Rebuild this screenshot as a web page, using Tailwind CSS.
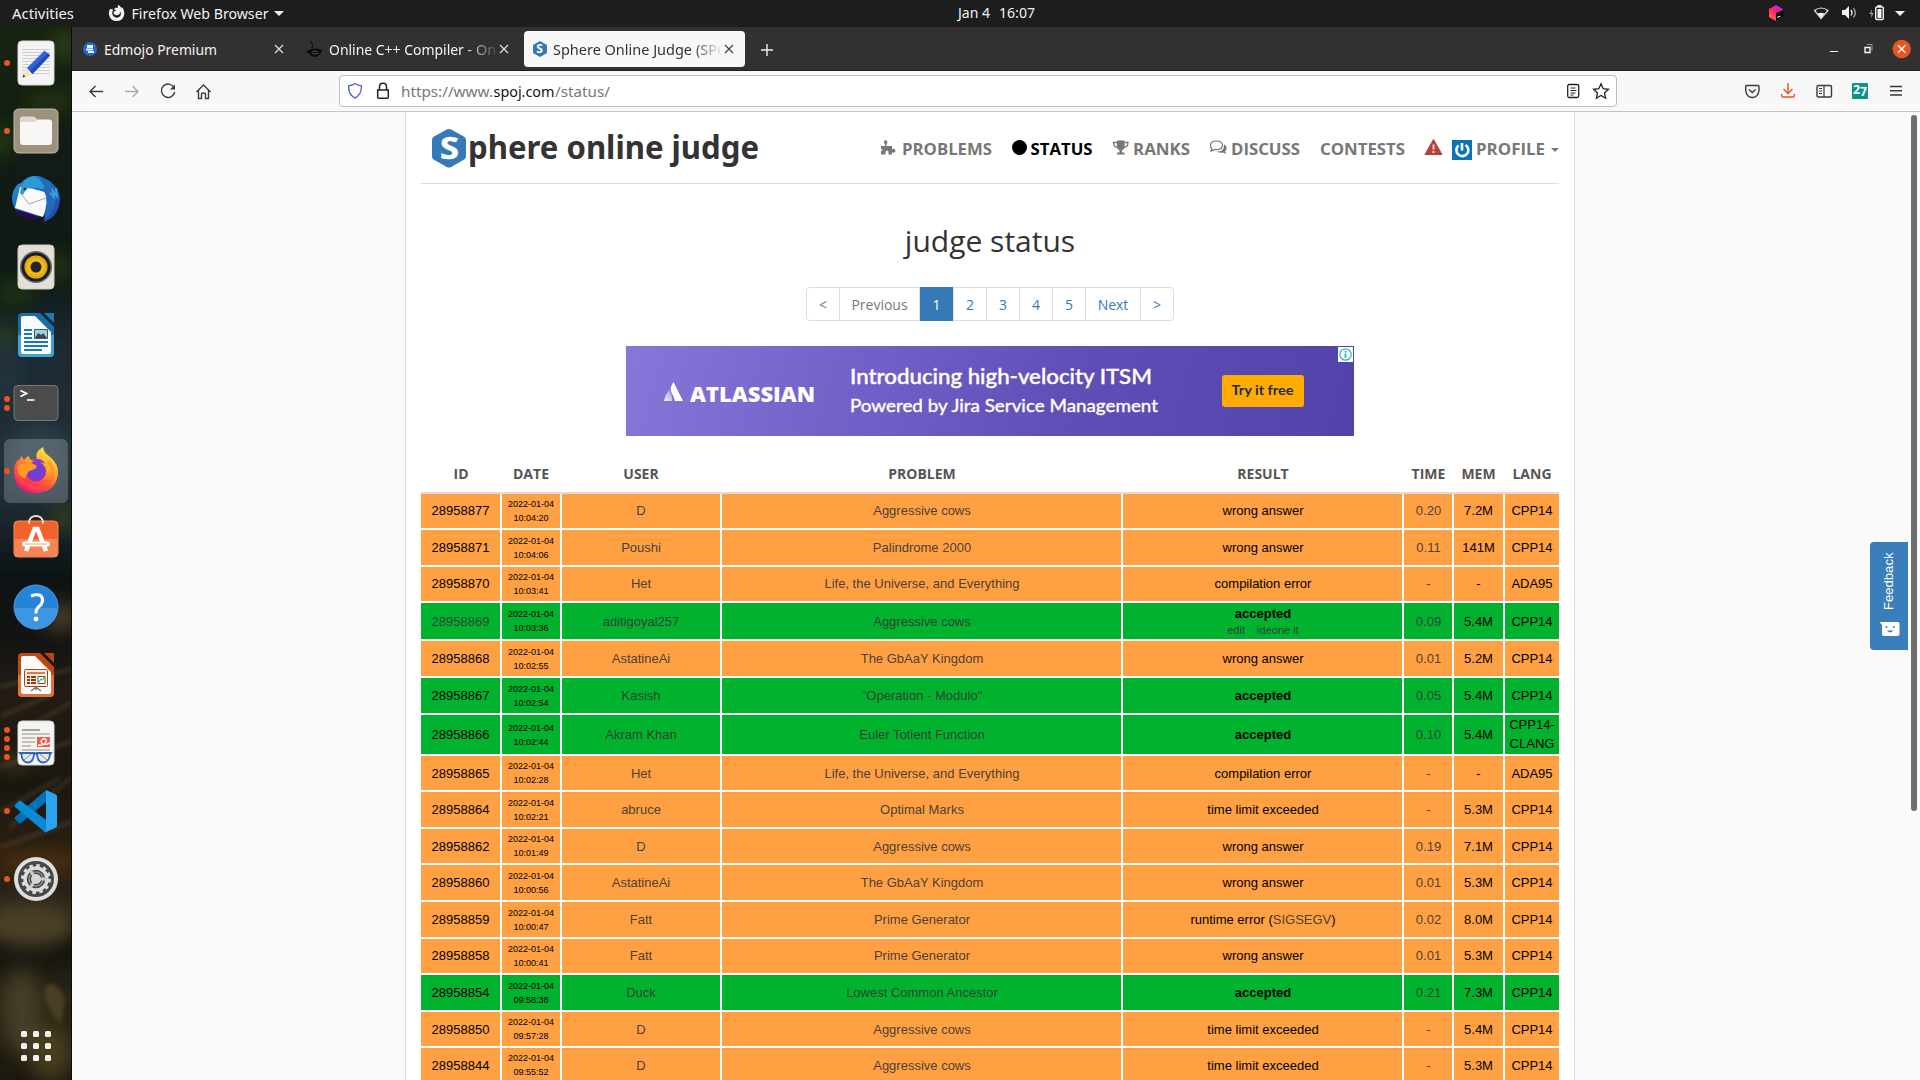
<!DOCTYPE html>
<html lang="en">
<head>
<meta charset="utf-8">
<title>Sphere Online Judge (SPOJ)</title>
<script src="https://cdn.jsdelivr.net/npm/@tailwindcss/browser@4"></script>
</head>
<body class="w-[1920px] h-[1080px] overflow-hidden bg-[#fafafa] font-['Noto_Sans',sans-serif]">
<div class="flex flex-col h-[1080px]">

<!-- desktop top bar -->
<header class="h-[27px] shrink-0 bg-[#1d1d1d] flex items-center text-[#f2f2f2]">
  <svg width="1920" height="27" font-size="14.5" fill="#f2f2f2">
    <text x="12" y="19" textLength="62" lengthAdjust="spacingAndGlyphs">Activities</text>
    <path d="M110 9c-1 2-1.500 4-.8 6.500a7.700 7.700 0 0 0 14.800 0c.8-3-.1-6.500-2-8.500-.3 1-.2 1.500 0 2-1-2-2.500-4-4.500-4 1 1.500.5 2.500-.2 3-1.500-.6-3 0-3.300 1.500 1 0 2 .3 2 1-1 .8-2.500.5-2.500 2 .2 2 2 3 3.800 2.800 2-.2 3.200-2 2.600-4 1.200 1.500 1.300 3.500.2 5-2 2-5.500 1.700-7-.5-1.300-2-1-4.500.2-6C111.500 9 110.500 9 110 9z"/>
    <text x="131.500" y="19" textLength="137" lengthAdjust="spacingAndGlyphs">Firefox Web Browser</text>
    <path d="M274 11h10l-5 5z"/>
    <text x="958" y="18" textLength="32" lengthAdjust="spacingAndGlyphs">Jan 4</text><text x="999" y="18" textLength="36" lengthAdjust="spacingAndGlyphs">16:07</text>
    <defs><linearGradient id="jb" x1="0" y1="1" x2="1" y2="0"><stop offset="0" stop-color="#fd8a1a"/><stop offset=".45" stop-color="#fe2470"/><stop offset="1" stop-color="#a020ff"/></linearGradient></defs>
    <path d="M1776 5l7 4v8l-7 4-7-4V9z" fill="url(#jb)"/><path d="M1776 13l7-3v7l-7 4z" fill="#000"/><path d="M1777 17.500l3.500-1.500" stroke="#fff"/>
    <path d="M1814.500 10.500q6.500-5 13.500 0L1821 18.500z" fill="none" stroke="#ddd" stroke-width="1.200"/><path d="M1817.500 13.500q3.500-1.500 7 0l-3.500 4.500z"/>
    <path d="M1842 10h3l4-4v13l-4-4h-3z"/><path d="M1851 10q2 2.500 0 5.500" fill="none" stroke="#eee" stroke-width="1.300"/><path d="M1853.500 8q3.500 4.500 0 9.500" fill="none" stroke="#bbb" stroke-width="1.200"/>
    <path d="M1872 9l-2.500 5h2l-.5 4 2.500-5h-2z" fill="#aaa"/><rect x="1875.700" y="7" width="7.600" height="12.500" rx="1" fill="none" stroke="#f2f2f2" stroke-width="1.400"/><path d="M1877.500 9h4v9h-4zM1877.500 5h4v2h-4z"/>
    <path d="M1895 11h10l-5 5z"/>
  </svg>
</header>

<div class="flex flex-1 min-h-0">

<!-- dock -->
<aside class="relative w-[72px] h-[1053px] shrink-0 bg-[#101a14] overflow-hidden">
  <svg class="absolute inset-0" width="72" height="1053">
    <defs><filter id="bl" x="-50%" y="-50%" width="200%" height="200%"><feGaussianBlur stdDeviation="9"/></filter>
    <filter id="bs"><feGaussianBlur stdDeviation="2"/></filter>
    <linearGradient id="wall" x1="0" y1="0" x2="0" y2="1"><stop offset="0" stop-color="#17240f"/><stop offset=".12" stop-color="#111c16"/><stop offset=".24" stop-color="#0f1a18"/><stop offset=".3" stop-color="#1b2a33"/><stop offset=".44" stop-color="#22303a"/><stop offset=".52" stop-color="#0d1315"/><stop offset=".58" stop-color="#131312"/><stop offset=".63" stop-color="#221c14"/><stop offset=".72" stop-color="#1a1710"/><stop offset=".78" stop-color="#2a2013"/><stop offset=".84" stop-color="#2a2418"/><stop offset=".87" stop-color="#12100e"/><stop offset=".92" stop-color="#2a2616"/><stop offset="1" stop-color="#1d180f"/></linearGradient></defs>
    <rect width="72" height="1053" fill="url(#wall)"/>
    <g filter="url(#bl)">
      <ellipse cx="65" cy="18" rx="14" ry="14" fill="#2c4013"/><ellipse cx="50" cy="75" rx="24" ry="10" fill="#263510"/><ellipse cx="2" cy="115" rx="10" ry="16" fill="#27410f"/>
      <ellipse cx="58" cy="240" rx="14" ry="16" fill="#22330f"/><ellipse cx="15" cy="265" rx="22" ry="12" fill="#1c3310"/><ellipse cx="4" cy="310" rx="8" ry="12" fill="#2d4710"/>
      <ellipse cx="40" cy="430" rx="30" ry="34" fill="#2b3e4a"/><ellipse cx="64" cy="493" rx="9" ry="10" fill="#444c10"/><ellipse cx="8" cy="350" rx="9" ry="30" fill="#25363f"/>
      <ellipse cx="60" cy="590" rx="20" ry="14" fill="#4a3a28"/><ellipse cx="14" cy="735" rx="20" ry="8" fill="#3d321b"/><ellipse cx="40" cy="835" rx="44" ry="8" fill="#54330f"/>
      <ellipse cx="30" cy="898" rx="46" ry="22" fill="#4b4028"/><ellipse cx="22" cy="985" rx="19" ry="42" fill="#453d25"/><ellipse cx="50" cy="1025" rx="22" ry="28" fill="#463e1c"/>
    </g>
    <g filter="url(#bs)" opacity=".7"><path d="M0 660l72-18M0 690l50-22M20 705l52-30M0 740l72-26M10 800l62-50M0 785l60-34M0 820l72-25" stroke="#5b4c35" stroke-width="2.500"/><path d="M46 958q12-5 19 15l-4 24q-12-8-16-28z" fill="#564c29"/></g>
    <path d="M71.500 0v1053" stroke="#0b0d0b"/>
  </svg>

  <nav class="relative flex flex-col pt-[2px]">
    <div class="relative h-[68px] flex items-center justify-center">
      <i class="absolute left-1 size-1.5 rounded-full bg-[#e95420]"></i>
      <svg width="48" height="48"><rect x="6" y="2" width="36" height="44" rx="4" fill="#f4f4f4" stroke="#d8d8d8"/><path d="M10 10.500h28M10 13.500h28M10 16.500h28M10 19.500h28M10 22.500h28M10 25.500h28M10 28.500h28M10 31.500h28M10 34.500h28" stroke="#cfcfcf"/><path d="M10.500 38.500l3.500-9 7 6.500z" fill="#fde0bc"/><path d="M10.500 38.500l1-3 2 2z" fill="#333"/><path d="M15 29L32.500 11.500l5.500 5L20.500 35z" fill="#2f62dd"/><path d="M18 32L36 14l2 2.500L20.500 35z" fill="#1f49b5"/></svg>
    </div>
    <div class="relative h-[68px] flex items-center justify-center">
      <i class="absolute left-1 size-1.5 rounded-full bg-[#e95420]"></i>
      <svg width="48" height="48"><rect x="2" y="2" width="44" height="44" rx="4.500" fill="#9c927d" stroke="#c0b9a8"/><path d="M8 14v-2q0-2.500 2.500-2.500h10.500q2 0 3 1.500l2 2.500h11q3 0 3 3v5H8z" fill="#ddd8ca"/><path d="M8 17q0-2 2-2h11q2 0 3-1.200t2.500-1.200H37q3 0 3 3V35q0 3-3 3H11q-3 0-3-3z" fill="#f8f7f5"/></svg>
    </div>
    <div class="relative h-[68px] flex items-center justify-center">
      <svg width="48" height="48"><defs><linearGradient id="tb" x1="0" y1="0" x2="1" y2="1"><stop offset="0" stop-color="#2b9ad6"/><stop offset=".5" stop-color="#1c5fb8"/><stop offset="1" stop-color="#2d46ae"/></linearGradient></defs><path d="M9 8Q20-4 34 4q14 7 14 21-2 18-17 22 4-3 3-7L18 44Q1 39 0 24 0 15 6 9z" fill="url(#tb)"/><path d="M3 34q7 9 18 12l7-4z" fill="#260c52"/><path d="M8 12l-5 21 28 9q6-15 2-25-12-4-25-5z" fill="#fafafa"/><path d="M8 17l9 12 17-6" fill="none" stroke="#aaa"/><path d="M8 18Q10 3 22 1q10 5 11 14-12-4-19-1l-3 6z" fill="#2d9bd2"/><path d="M22 14q14-3 13 18l-3 13Q46 36 43 15q-4-11-14-12 5 7 2 12z" fill="#216bb9"/><path d="M38 18l4 4-1-6 4 5-1-8" fill="none" stroke="#36a2dd" stroke-width="2"/><circle cx="13" cy="14" r="1.500" fill="#352d47"/></svg>
    </div>
    <div class="relative h-[68px] flex items-center justify-center">
      <svg width="48" height="48"><rect x="6" y="2" width="36" height="44" rx="4" fill="#e3dfd6" stroke="#cfcabd"/><circle cx="24" cy="24" r="16" fill="#6a6a6e"/><circle cx="24" cy="24" r="14.500" fill="#1c1b26"/><circle cx="24" cy="24" r="11.500" fill="#efbc16"/><circle cx="24" cy="24" r="10" fill="none" stroke="#e2a808" stroke-width="2"/><circle cx="24" cy="24" r="5.500" fill="#242424"/></svg>
    </div>
    <div class="relative h-[68px] flex items-center justify-center">
      <svg width="48" height="48"><path d="M10 2h18l14 14v26q0 4-4 4H10q-4 0-4-4V6q0-4 4-4z" fill="#1a6ea8"/><path d="M6 24h36v18q0 4-4 4H10q-4 0-4-4z" fill="#41a2d6"/><path d="M11 5h12l16 16v20q0 2-2 2H11q-2 0-2-2V7q0-2 2-2z" fill="#fbfbfb"/><path d="M32 2h10v10z" fill="#1d77b4"/><path d="M12 19h8M12 23h8M12 27h8M12 31h24M12 35h24M12 39h18" stroke="#1f7ab4" stroke-width="2"/><path d="M22.500 18.500h13v9h-13z" fill="#9fd2ee" stroke="#26618b"/><path d="M23 27l3-5 3 2 2-2 4 5z" fill="#444"/><path d="M32 19h3v3z" fill="#f8b51c"/></svg>
    </div>
    <div class="relative h-[68px] flex items-center justify-center">
      <div class="absolute left-1 flex flex-col gap-[3px]"><i class="size-1.5 rounded-full bg-[#e95420]"></i><i class="size-1.5 rounded-full bg-[#e95420]"></i></div>
      <svg width="48" height="48"><rect x="2" y="6.500" width="44" height="35" rx="4" fill="#4c4c4c" stroke="#777"/><path d="M8.500 11.500l6 3-6 3" fill="none" stroke="#fff" stroke-width="1.800"/><path d="M15 21h7.500" stroke="#fff" stroke-width="1.600"/></svg>
    </div>
    <div class="relative h-[68px] flex items-center justify-center">
      <div class="absolute left-1 top-[2px] size-16 rounded-md bg-white/20"></div>
      <i class="absolute left-1 size-1.5 rounded-full bg-[#e95420]"></i>
      <svg class="relative" width="48" height="48"><defs><linearGradient id="fx" x1=".85" y1="0" x2=".3" y2="1"><stop offset="0" stop-color="#fff04a"/><stop offset=".4" stop-color="#ffac28"/><stop offset=".7" stop-color="#ff4d3c"/><stop offset="1" stop-color="#f5117d"/></linearGradient><radialGradient id="fp"><stop offset="0" stop-color="#5a4ae0"/><stop offset="1" stop-color="#8a35c4"/></radialGradient></defs><path d="M9 9q2 2 3 4 2-3 5-4 0 3 2 4 4-1 6 0Q22 5 31 0q1 6 6 9 10 8 9 18-2 18-22 19Q4 46 2 27 1 17 7 12q0 1 .5 2Q8 12 9 9z" fill="url(#fx)"/><path d="M36 14q9 10 2 21-9 10-22 4-9-4-11-14" fill="none" stroke="#ff6a35" stroke-width="4" opacity=".35"/><circle cx="24" cy="24.500" r="10" fill="url(#fp)"/><path d="M20 13q10-3 13 4-3-2-6-1l-3 2z" fill="#8f38d0"/><path d="M8 18q7-6 17 1 0 3-8 5-3 4-4 8-8-4-8-12z" fill="#ff9a24"/></svg>
    </div>
    <div class="relative h-[68px] flex items-center justify-center">
      <svg width="48" height="48"><rect x="2" y="6" width="44" height="36" rx="4" fill="#f0622a" stroke="#f88c5d"/><path d="M2.500 24h43v14q0 3.500-3.500 3.500H6q-3.500 0-3.500-3.500z" fill="#f58553"/><path d="M17 9V7q1-6 7-6t7 6v2" fill="none" stroke="#f8dfb0" stroke-width="1.800"/><path d="M14 36l8.500-22h3L34 36" fill="none" stroke="#fff" stroke-width="4.500"/><rect x="10" y="26.500" width="28" height="5" rx="2.500" fill="#fff"/><path d="M13 29h22" stroke="#f4a885"/></svg>
    </div>
    <div class="relative h-[68px] flex items-center justify-center">
      <svg width="48" height="48"><circle cx="24" cy="24" r="22" fill="#2583d8" stroke="#4aa0e6"/><path d="M2.500 25h43a21.500 21.500 0 0 1-43 0z" fill="#3c97e0"/><path d="M19 13q11-4 11.500 4 0 4-3.500 6.500-3 2.500-3 6v1" fill="none" stroke="#fff" stroke-width="3"/><circle cx="24" cy="36" r="2.400" fill="#fff"/></svg>
    </div>
    <div class="relative h-[68px] flex items-center justify-center">
      <svg width="48" height="48"><path d="M10 2h18l14 14v26q0 4-4 4H10q-4 0-4-4V6q0-4 4-4z" fill="#c1490f"/><path d="M6 24h36v18q0 4-4 4H10q-4 0-4-4z" fill="#de7337"/><path d="M11 5h12l16 16v20q0 2-2 2H11q-2 0-2-2V7q0-2 2-2z" fill="#fbfbfb"/><path d="M32 2h10v10z" fill="#b84712"/><rect x="12.500" y="18.500" width="23" height="17" rx="1" fill="#fdf0e6" stroke="#a54315"/><path d="M15 22h18" stroke="#e17b43" stroke-width="2"/><path d="M15 26h3m1 0h5M15 29h3m1 0h5M15 32h3m1 0h5" stroke="#93380f" stroke-width="1.800"/><path d="M26 25.500h7v7h-7z" fill="#fff" stroke="#555"/><path d="M27 31l2-3 1.500 1 2-3" stroke="#2b9e3c" fill="none"/><path d="M24 36l-5 4M24 36l5 4M24 36v3" stroke="#777" stroke-width="1.500"/></svg>
    </div>
    <div class="relative h-[68px] flex items-center justify-center">
      <div class="absolute left-1 flex flex-col gap-[3px]"><i class="size-1.5 rounded-full bg-[#e95420]"></i><i class="size-1.5 rounded-full bg-[#e95420]"></i><i class="size-1.5 rounded-full bg-[#e95420]"></i><i class="size-1.5 rounded-full bg-[#e95420]"></i></div>
      <svg width="48" height="48"><rect x="6" y="2" width="36" height="44" rx="4" fill="#f4f4f3" stroke="#d8d8d8"/><path d="M10 11h18" stroke="#aaa392" stroke-width="2"/><path d="M10 15h28M10 19h13M10 23h13M10 27h9M10 31h28" stroke="#c5c1b6" stroke-width="2"/><rect x="25" y="18" width="13" height="10" fill="#f15a4f"/><path d="M26 26q6 1 8-3 1-4-3-3-4 3 0 5 3 1 7-1" fill="none" stroke="#fff" stroke-width="1.400"/><path d="M8 34h14q0 9-6 9.500-6 0-6.500-8zM25 34q0 9 6 9.500 6 0 7-8l1-1.500z" fill="#e8e8ea" stroke="#2a67b6" stroke-width="1.800"/><path d="M12 41l7-6M28 35l7 6" stroke="#888"/><path d="M21 35q2.500-1 5 0" stroke="#2a67b6" stroke-width="2" fill="none"/></svg>
    </div>
    <div class="relative h-[68px] flex items-center justify-center">
      <i class="absolute left-1 size-1.5 rounded-full bg-[#e95420]"></i>
      <svg width="48" height="48"><path d="M34 3v12L9 36q-1 1-2 0l-4-4q-1-1 0-2z" fill="#0071b5"/><path d="M3 18l4-4q1-1 2 0l25 19v13L3 20q-1-1 0-2z" fill="#0a8ad6"/><path d="M34 3l10 4.500q1 .5 1 1.500v30q0 1-1 1.500L34 45z" fill="#2aa3f0"/></svg>
    </div>
    <div class="relative h-[68px] flex items-center justify-center">
      <i class="absolute left-1 size-1.5 rounded-full bg-[#e95420]"></i>
      <svg width="48" height="48"><circle cx="24" cy="24" r="22" fill="#dedede"/><circle cx="24" cy="24" r="18" fill="#474747"/><circle cx="24" cy="24" r="13.500" fill="none" stroke="#dcdcdc" stroke-width="3" stroke-dasharray="3.530 3.530"/><circle cx="24" cy="24" r="11" fill="none" stroke="#dcdcdc" stroke-width="3.500"/><circle cx="24" cy="24" r="7" fill="none" stroke="#8c8c8c" stroke-width="1.500"/><path d="M24 24h11M24 24l-6-9M24 24l-6 9" stroke="#c9c9c9" stroke-width="3"/><circle cx="24" cy="24" r="5" fill="#d6d6d6"/></svg>
    </div>
  </nav>
  <svg class="relative mt-[117px] ml-[20px]" width="32" height="32" fill="#f4f4f4"><rect x="1" y="1" width="6" height="6" rx="1.500"/><rect x="13" y="1" width="6" height="6" rx="1.500"/><rect x="25" y="1" width="6" height="6" rx="1.500"/><rect x="1" y="13" width="6" height="6" rx="1.500"/><rect x="13" y="13" width="6" height="6" rx="1.500"/><rect x="25" y="13" width="6" height="6" rx="1.500"/><rect x="1" y="25" width="6" height="6" rx="1.500"/><rect x="13" y="25" width="6" height="6" rx="1.500"/><rect x="25" y="25" width="6" height="6" rx="1.500"/></svg>
</aside>

<!-- browser window -->
<main class="relative flex-1 min-w-0 flex flex-col">
  <!-- tabs -->
  <div class="h-11 shrink-0 bg-[#333031] border-b border-[#1f1d1e] flex items-start pt-1 pl-[2px] gap-1">
    <div class="w-[221px] h-9 flex items-center pl-[9px]">
      <svg width="14" height="14"><circle cx="7" cy="7" r="7" fill="#2169c8"/><path d="M4 3h6v3H4zM3 6.500h7v2H3zM5 9h6v2H5z" fill="#e9f2ff"/></svg>
      <svg class="ml-[7px]" width="160" height="24" font-size="14.500" fill="#f3f3f3"><text x="0" y="18" textLength="113" lengthAdjust="spacingAndGlyphs">Edmojo Premium</text></svg>
      <svg class="ml-[10px]" width="10" height="10"><path d="M1 1l8 8M9 1L1 9" stroke="#ddd" stroke-width="1.200"/></svg>
    </div>
    <div class="w-[221px] h-9 flex items-center pl-[8px]">
      <svg width="16" height="16"><path d="M3 0q4 3 2 7" fill="none" stroke="#111" stroke-width="1.200"/><path d="M0 9q3 1 4-1 6-1.500 11 1-1 6-7 7-5-1-5-3-3 0-3-4z" fill="#0b0b0b"/><ellipse cx="8" cy="11.500" rx="3" ry="1.500" fill="none" stroke="#555"/></svg>
      <div class="ml-[6px] w-[168px] h-6 overflow-hidden [mask-image:linear-gradient(to_right,#000_80%,transparent_102%)]"><svg width="190" height="24" font-size="14.500" fill="#f3f3f3"><text x="0" y="18" textLength="143" lengthAdjust="spacingAndGlyphs">Online C++ Compiler -</text><text x="147" y="18">Onli</text></svg></div>
      <svg class="ml-[2px]" width="10" height="10"><path d="M1 1l8 8M9 1L1 9" stroke="#ddd" stroke-width="1.200"/></svg>
    </div>
    <div class="w-[221px] h-9 rounded bg-[#f8f8f8] flex items-center pl-[9px]">
      <svg width="14" height="16"><path d="M7 0l7 4v8l-7 4-7-4V4z" fill="#337ab7"/><text x="3.200" y="12.300" font-size="12" font-weight="700" fill="#fff">S</text></svg>
      <div class="ml-[6px] w-[170px] h-6 overflow-hidden [mask-image:linear-gradient(to_right,#000_82%,transparent)]"><svg width="200" height="24" font-size="14.500" fill="#333"><text x="0" y="18" textLength="139" lengthAdjust="spacingAndGlyphs">Sphere Online Judge</text><text x="143" y="18">(SPOJ)</text></svg></div>
      <svg class="ml-[1px]" width="10" height="10"><path d="M1 1l8 8M9 1L1 9" stroke="#444" stroke-width="1.200"/></svg>
    </div>
    <svg class="ml-[11px] mt-[12px]" width="14" height="14"><path d="M7 1v12M1 7h12" stroke="#eee" stroke-width="1.400"/></svg>
    <svg class="ml-auto mr-[8px] mt-[8px]" width="82" height="20"><path d="M0 12.500h8" stroke="#fff"/><path d="M35 8.500h5v5h-5z" fill="none" stroke="#fff" stroke-width="1.300"/><path d="M37 5.500h5v6" fill="none" stroke="#999"/><circle cx="71.700" cy="10" r="9.200" fill="#e95420"/><path d="M68 6.300l7.400 7.400M75.400 6.300L68 13.700" stroke="#fff" stroke-width="1.500"/></svg>
  </div>

  <!-- toolbar -->
  <div class="h-[41px] shrink-0 bg-[#f8f8f8] border-b border-[#c4c4c4] flex items-center pl-4">
    <svg width="124" height="20" fill="none" stroke="#3a3a3a" stroke-width="1.400">
      <path d="M15 10.500H2M7.500 5L2 10.500l5.500 5.500"/>
      <path d="M37 10.500h13M44.500 5l5.500 5.500-5.500 5.500" stroke="#aaa"/>
      <path d="M86 6.500A6.700 6.700 0 1 0 86.700 11"/><path d="M87 3.500v5h-5z" fill="#3a3a3a" stroke="none"/>
      <path d="M108.500 11l7-7 7 7M110.500 9.500v8h3v-4q0-1.500 2-1.500t2 1.500v4h3v-8"/>
    </svg>
    <div class="ml-[127px] w-[1278px] h-8 rounded bg-white border border-[#bdbdbd] flex items-center pl-2">
      <svg width="44" height="18" fill="none" stroke-width="1.400"><defs><linearGradient id="sh" x1="0" y1="0" x2="1" y2="0"><stop offset="0" stop-color="#3c62d0"/><stop offset="1" stop-color="#8a55e0"/></linearGradient></defs><path d="M7 1.500q3 2 6.300 2.300Q14 12.500 7 16 0 12.500.7 3.800 4 3.500 7 1.500z" stroke="url(#sh)"/><path d="M29.700 8h10.600v7.300q0 1-1 1h-8.600q-1 0-1-1zM31.500 8V5q0-3.700 3.500-3.700T38.500 5v3" stroke="#222" stroke-width="1.500"/></svg>
      <svg class="ml-[9px]" width="220" height="26" font-size="15" fill="#777"><text x="0" y="19" textLength="92" lengthAdjust="spacingAndGlyphs">https://www.</text><text x="92.500" y="19" fill="#111" textLength="61" lengthAdjust="spacingAndGlyphs">spoj.com</text><text x="154" y="19" textLength="55" lengthAdjust="spacingAndGlyphs">/status/</text></svg>
      <svg class="ml-auto mr-[6px]" width="44" height="18" fill="none" stroke="#222" stroke-width="1.300"><rect x="1.700" y="2.500" width="11" height="13" rx="1.500"/><path d="M4.500 6h5M4.500 8.500h6M4.500 11h5M4.500 13h3" stroke-width="1"/><path d="M35 1.800l2.200 4.900 5.200.6-3.900 3.600 1.100 5.300-4.600-2.700-4.600 2.700 1.100-5.300-3.900-3.600 5.200-.6z"/></svg>
    </div>
    <svg class="ml-[126px]" width="164" height="20" fill="none" stroke="#3a3a3a" stroke-width="1.400">
      <path d="M3.500 4.500h11.500q1 0 1 1v4q-1 7-6.700 7T2.700 9.500v-4q0-1 .8-1z"/><path d="M6 8.500l3.300 3 3.300-3"/>
      <path d="M45 2v10.500M40.500 8l4.500 4.700L49.500 8M38.700 13v2q0 1 1 1h10.600q1 0 1-1v-2" stroke="#e95420"/>
      <rect x="74" y="4.500" width="14.500" height="11.500" rx="1.500"/><path d="M81 4.500V16M76 7.500h3M76 10h3M76 12.500h3" stroke-width="1.200"/>
      <rect x="109" y="2" width="16" height="16" rx="1" fill="#0b9488" stroke="none"/><text x="110" y="13" font-size="12" font-weight="700" textLength="7" lengthAdjust="spacingAndGlyphs" fill="#fff" stroke="none">2</text><text x="117" y="15" font-size="12.500" font-weight="700" textLength="7" lengthAdjust="spacingAndGlyphs" fill="#fff" stroke="none">7</text>
      <path d="M147 5.500h12M147 9.700h12M147 14h12"/>
    </svg>
  </div>

  <!-- page -->
  <div class="flex-1 min-h-0 overflow-hidden bg-[#fafafa] pl-[333px]">
    <div class="w-[1170px] h-full bg-white border-x border-[#ddd] px-[15px] font-['Open_Sans',sans-serif]">
      <div class="h-[72px] border-b border-[#ddd] flex items-start">
        <svg class="mt-4" width="350" height="46"><path d="M28 1q1.200 0 2.200.6l13 7.200Q45 10 45 12v16.500q0 2-1.800 3L30.200 39Q28 40 25.800 39L12.500 31.500q-1.500-1-1.500-3V12q0-2 1.500-3.200l13.300-7.200Q26.800 1 28 1z" fill="#337ab7"/><text x="19" y="31" font-family="Noto Sans" font-size="31" font-weight="700" fill="#fff" stroke="#fff" stroke-width=".5" textLength="19" lengthAdjust="spacingAndGlyphs">S</text><text x="47" y="30.500" font-family="Noto Sans" font-size="32" font-weight="700" fill="#333" textLength="291" lengthAdjust="spacingAndGlyphs">phere online judge</text></svg>
        <svg class="ml-auto mt-6" width="680" height="28" font-size="16" font-weight="700" fill="#777">
          <path d="M2 10h4V8q-1.300-1-1-2.500Q5.500 4 7 4.300q1.800.7 1.300 2.300Q8 8 7.500 8.500V10H13v3.500q1.500-1.500 3 0 1 1.500 0 2.500-1.300 1.300-3 0v2.500H9.500V16q0-1.500-1.500-1.500T6.500 16v2.500H2V15q1.500 0 1.500-1T2 13z"/>
          <text x="23" y="19" textLength="90" lengthAdjust="spacingAndGlyphs">PROBLEMS</text>
          <circle cx="140.500" cy="11.500" r="7.500" fill="#000"/><text x="151.500" y="19" fill="#000" textLength="62" lengthAdjust="spacingAndGlyphs">STATUS</text>
          <path d="M238 4.500h7.500v2q1 6-2.500 8v2h2.500v2H238v-2h2.500v-2Q237 12.500 238 6.500z"/><path d="M238 6.500h-3.500q0 5 5 5M245.500 6.500h3.500q0 5-5 5" fill="none" stroke="#777" stroke-width="1.300"/>
          <text x="254" y="19" textLength="57" lengthAdjust="spacingAndGlyphs">RANKS</text>
          <path d="M337.500 5q6 0 6 4.300t-6 4.300l-2 0-3.500 1.500 1-2.500Q331.500 12 331.500 9.300 331.500 5 337.500 5z" fill="none" stroke="#777" stroke-width="1.200"/><path d="M345 8q3 2.500 2.500 5-.5 1.700-1.500 2.500l1.500 2.500-4-1.500q-4 .5-6-1 7 .3 7.500-5z"/>
          <text x="352" y="19" textLength="69" lengthAdjust="spacingAndGlyphs">DISCUSS</text>
          <text x="441" y="19" textLength="85" lengthAdjust="spacingAndGlyphs">CONTESTS</text>
          <path d="M554.500 3.500l8.500 15h-17z" fill="#b5403c" stroke="#b5403c" stroke-linejoin="round"/><path d="M554.500 8.500v5M554.500 15v2" stroke="#f4d7d5" stroke-width="2"/>
          <rect x="573" y="4" width="20" height="20" fill="#0a73b8"/><path d="M579.500 9.500a6 6 0 1 0 7-.5" fill="none" stroke="#fff" stroke-width="2.600"/><path d="M583 7v7.500" stroke="#fff" stroke-width="2.600"/>
          <text x="597" y="19" textLength="69" lengthAdjust="spacingAndGlyphs">PROFILE</text>
          <path d="M672 12h8l-4 4z"/>
        </svg>
      </div>

      <h1 class="mt-[36px] h-[42px] text-center text-[30px] leading-[42px] text-[#333]">judge status</h1>

      <div class="mt-[25px] mx-auto w-[368px] h-[34px] flex rounded border border-[#ddd] text-sm leading-[34px] text-center text-[#337ab7] divide-x divide-[#ddd]">
        <span class="w-[33px] h-8 text-[#777]">&lt;</span><span class="w-[80px] h-8 text-[#777]">Previous</span><span class="w-[34px] -my-px h-[34px] leading-[36px] bg-[#337ab7] text-white">1</span><span class="w-[33px] h-8">2</span><span class="w-[33px] h-8">3</span><span class="w-[33px] h-8">4</span><span class="w-[33px] h-8">5</span><span class="w-[55px] h-8">Next</span><span class="w-[32px] h-8">&gt;</span>
      </div>

      <!-- banner -->
      <div class="relative mt-[25px] mx-auto w-[728px] h-[90px] bg-linear-[105deg,#8777d9_0%,#6f5fc6_35%,#5f4fb6_60%,#5243aa_100%]">
        <svg width="728" height="90" font-family="Lato" fill="#fff">
          <defs><linearGradient id="at" x1="1" y1="0" x2="0" y2="1"><stop offset="0" stop-color="#9a8de0"/><stop offset="1" stop-color="#fff"/></linearGradient></defs>
          <path d="M43 44q-4 5-5 11h8q1-6-3-11z" fill="url(#at)"/><path d="M47.500 36l9.500 19h-8q-1-4-3.500-8.500-2.500-4 2-10.500z"/>
          <text x="64" y="55.500" font-family="Open Sans" font-size="21" font-weight="800" textLength="125" lengthAdjust="spacingAndGlyphs">ATLASSIAN</text>
          <text x="224" y="37.500" font-size="21" font-weight="500" stroke="#fff" stroke-width=".4" textLength="302" lengthAdjust="spacingAndGlyphs">Introducing high-velocity ITSM</text>
          <text x="224" y="65.500" font-size="18" stroke="#fff" stroke-width=".4" textLength="308" lengthAdjust="spacingAndGlyphs">Powered by Jira Service Management</text>
          <rect x="596" y="29" width="82" height="32" rx="3" fill="#ffab00"/><text x="605.500" y="49" font-size="13.500" font-weight="700" fill="#1d2b4d" textLength="62" lengthAdjust="spacingAndGlyphs">Try it free</text>
          <rect x="712" y="1" width="15" height="15" fill="#fff"/><circle cx="719.500" cy="8.500" r="5.700" fill="none" stroke="#29b6cf" stroke-width="1.200"/><path d="M719.500 5v1.600M719.500 7.600V12" stroke="#29b6cf" stroke-width="1.800"/>
        </svg>
      </div>

      <!-- submissions -->
      <div class="mt-[19px] h-[39px] border-b-2 border-[#ddd] grid grid-cols-[79px_58px_158px_399px_279px_48px_49px_54px] gap-x-[2px] text-sm leading-[37px] font-bold text-[#555] text-center">
        <span class="pl-px">ID</span><span>DATE</span><span>USER</span><span class="pl-px">PROBLEM</span><span class="pl-px">RESULT</span><span class="pl-px">TIME</span><span>MEM</span><span>LANG</span>
      </div>
      <div id="rows" class="flex flex-col gap-[2px] text-[13px] leading-[19px] text-black text-center font-['Liberation_Sans',sans-serif]"></div>
    </div>
  </div>

  <!-- scrollbar and feedback tab lie over the page -->
  <div class="absolute right-[3px] top-[88px] w-[6px] h-[696px] rounded-full bg-[#6e6e6e]"></div>
  <div class="absolute right-3 top-[515px] w-[38px] h-[108px] rounded-l bg-[#3a7ebb]">
    <svg width="38" height="108"><text transform="translate(23 68) rotate(-90)" font-family="Liberation Sans" font-size="13.500" fill="#fff" textLength="57.500" lengthAdjust="spacingAndGlyphs">Feedback</text><path d="M9.500 80H28q1.500 0 1.500 1.500V92q0 2-2 2H14q-2 0-2-2V83z" fill="#fff"/><path d="M16.500 84v2M24 84v2" stroke="#3a7ebb" stroke-width="1.500"/><path d="M17 88.500h6.500q-3.200 4-6.500 0z" fill="#3a7ebb"/></svg>
  </div>
</main>
</div>
</div>

<script>
const W = 'wrong answer', C = 'compilation error', T = 'time limit exceeded', A = '<b>accepted</b>';
// height, id, time, user, problem, result, time, mem, lang, tight (text sits a pixel higher)
const rows = [
 [34,'28958877','10:04:20','D','Aggressive cows',W,'0.20','7.2M','CPP14',1],
 [35,'28958871','10:04:06','Poushi','Palindrome 2000',W,'0.11','141M','CPP14'],
 [34,'28958870','10:03:41','Het','Life, the Universe, and Everything',C,'-','-','ADA95',1],
 [36,'<span class="text-[#333]/85">28958869</span>','10:03:36','aditigoyal257','Aggressive cows','<div class="pb-px">'+A+'<div class="text-[11px] leading-[14px] -mt-px pt-px flex justify-center gap-3 text-[#333]/90"><span>edit</span><span>ideone it</span></div></div>','0.09','5.4M','CPP14'],
 [35,'28958868','10:02:55','AstatineAi','The GbAaY Kingdom',W,'0.01','5.2M','CPP14'],
 [35,'28958867','10:02:54','Kasish','"Operation - Modulo"',A,'0.05','5.4M','CPP14'],
 [39,'28958866','10:02:44','Akram Khan','Euler Totient Function',A,'0.10','5.4M','<div class="leading-[18.5px]">CPP14-<br>CLANG</div>'],
 [34,'28958865','10:02:28','Het','Life, the Universe, and Everything',C,'-','-','ADA95'],
 [35,'28958864','10:02:21','abruce','Optimal Marks',T,'-','5.3M','CPP14'],
 [34,'28958862','10:01:49','D','Aggressive cows',W,'0.19','7.1M','CPP14'],
 [35,'28958860','10:00:56','AstatineAi','The GbAaY Kingdom',W,'0.01','5.3M','CPP14'],
 [35,'28958859','10:00:47','Fatt','Prime Generator','runtime error (<span class="text-[#333]/90">SIGSEGV</span>)','0.02','8.0M','CPP14'],
 [34,'28958858','10:00:41','Fatt','Prime Generator',W,'0.01','5.3M','CPP14',1],
 [35,'28958854','09:58:38','Duck','Lowest Common Ancestor',A,'0.21','7.3M','CPP14'],
 [34,'28958850','09:57:28','D','Aggressive cows',T,'-','5.4M','CPP14'],
 [34,'28958844','09:55:52','D','Aggressive cows',T,'-','5.3M','CPP14'],
];
document.getElementById('rows').innerHTML = rows.map(([h, id, t, u, p, r, s, m, l, tight]) => {
  const bg = r.includes(A) ? 'bg-[#00b22d]' : 'bg-[#ffa042]';
  const cell = (html, c = '') => `<div class="${bg} flex flex-col items-center justify-center ${tight && !c.includes('text-[9px]') ? 'pb-px' : ''} ${c}"><div>${html}</div></div>`;
  return `<div class="shrink-0 grid grid-cols-[79px_58px_158px_399px_279px_48px_49px_54px] gap-x-[2px]" style="height:${h}px">` +
    cell(id) + cell('2022-01-04<br>' + t, 'text-[9px] leading-[14px]') + cell(u, 'text-[#333]/90') + cell(p, 'text-[#333]/90 pl-px') +
    cell(r, 'pl-px') + cell(s, 'text-[#333]/90 pl-px') + cell(m) + cell(l) + '</div>';
}).join('');
</script>
</body>
</html>
